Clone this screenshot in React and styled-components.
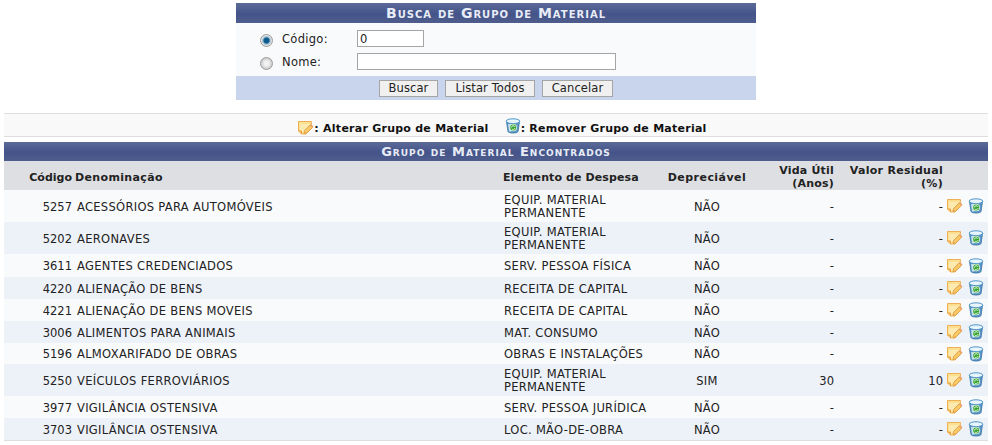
import React from 'react';
import styled, { createGlobalStyle } from 'styled-components';

const GlobalStyle = createGlobalStyle`
  html, body {
    margin: 0;
    padding: 0;
    background: #fff;
    font-family: "DejaVu Sans", Verdana, sans-serif;
    font-size: 11.5px;
    letter-spacing: 0.3px;
    color: #222;
  }
`;

const Page = styled.div`
  width: 992px;
  height: 445px;
  overflow: hidden;
  padding: 3px 4px 0;
  box-sizing: border-box;
`;

const Caption = styled.div`
  height: ${({ $h }) => $h}px;
  line-height: ${({ $h }) => $h + 1}px;
  background: linear-gradient(#5b6a97 0%, #44548a 55%, #4f5d8c 100%);
  color: #e8ecf6;
  font-weight: bold;
  font-variant: small-caps;
  font-size: ${({ $size }) => $size}px;
  letter-spacing: ${({ $ls }) => $ls}px;
  text-align: center;
`;

const SearchBox = styled.form`
  width: 520px;
  margin: 0 auto;
  background: #f9fafc;
`;

const SearchBody = styled.div`
  display: grid;
  grid-template-columns: 22px 75px 1fr;
  grid-auto-rows: 23px;
  align-items: center;
  padding: 4px 0 0 24px;
  height: 49px;
`;

const Radio = styled.span`
  width: 11px;
  height: 11px;
  border-radius: 50%;
  border: 1px solid #9a9a9a;
  margin-top: 3px;
  background: ${({ $on }) =>
    $on
      ? 'radial-gradient(circle, #0d5a8c 0 2.5px, #8ab4cf 3.5px, #e4e4e4 5px)'
      : 'radial-gradient(circle, #f2f2f2 0 2px, #d2d2d2 5px)'};
`;

const Label = styled.label`
  color: #222;
`;

const Input = styled.input`
  box-sizing: border-box;
  display: block;
  width: ${({ $w }) => $w}px;
  height: 17px;
  padding: 0 2px;
  border: 1px solid #a5a5a5;
  background: #fff;
  font: 11.5px "DejaVu Sans", Verdana, sans-serif;
  color: #222;
`;

const SearchFooter = styled.div`
  height: 24px;
  background: #c8d5ec;
  display: flex;
  justify-content: center;
  align-items: center;
  gap: 7px;
`;

const Button = styled.button`
  height: 17px;
  width: ${({ $w }) => $w}px;
  padding: 0;
  border: 1px solid #a5a5a5;
  background: #f0f0f0;
  font: 11.5px "DejaVu Sans", Verdana, sans-serif;
  letter-spacing: 0.1px;
  color: #222;
`;

const Legend = styled.div`
  margin-top: 13px;
  height: 22px;
  border-top: 1px solid #ddd;
  border-bottom: 1px solid #ddd;
  background: #f9f9f9;
  display: flex;
  justify-content: center;
  align-items: center;
  gap: 16px;
  font-size: 11px;
  font-weight: bold;
  letter-spacing: 0.25px;
  color: #111;
  padding-left: 12px;
`;

const LegendItem = styled.span`
  display: inline-flex;
  align-items: center;
  line-height: 13px;
  padding-top: 6px;
  svg {
    margin-top: ${({ $iconTop }) => $iconTop}px;
  }
`;

const Results = styled.div`
  margin-top: 5px;
  border-bottom: 1px solid #ddd;
`;

const Table = styled.table`
  width: 984px;
  table-layout: fixed;
  border-collapse: collapse;
`;

const HeadRow = styled.tr`
  height: 29px;
  background: #dedfe3;
`;

const Th = styled.th`
  padding: 3px ${({ $pr }) => $pr ?? 2}px 0 ${({ $pl }) => $pl ?? 2}px;
  font-weight: bold;
  font-size: 11px;
  line-height: 13px;
  letter-spacing: ${({ $ls }) => $ls ?? 0.2}px;
  color: #222;
  text-align: ${({ $align }) => $align || 'left'};
`;

const Row = styled.tr`
  height: ${({ $h }) => $h}px;
  background: ${({ $odd }) => ($odd ? '#edf1f8' : '#f9fafc')};
`;

const Td = styled.td`
  padding: 2px ${({ $pr }) => $pr ?? 2}px 0 ${({ $pl }) => $pl ?? 2}px;
  line-height: 13px;
  letter-spacing: ${({ $ls }) => $ls ?? 0.3}px;
  color: #222;
  text-align: ${({ $align }) => $align || 'left'};
`;

const IconCell = styled.td`
  padding: 0;
  line-height: 0;
  text-align: center;
`;

const PencilIcon = () => (
  <svg width="17" height="16" viewBox="0 0 17 16">
    <path d="M1.5 1.5H14.5L14 8L9 14H4.5L1.5 11Z" fill="#fde08f" stroke="#eeb054" strokeWidth="1" />
    <path d="M3 4H13V8L9 12.5H5L3 10.5Z" fill="#fdeab0" />
    <path d="M1.5 11L4.5 11V14" fill="#f5c877" stroke="#e59c3c" strokeWidth="1" />
    <path d="M7.5 10.5L13 5L15.5 7.5L10 13L7 13.5Z" fill="#f8c766" stroke="#dc9740" strokeWidth="0.8" />
    <path d="M13 5L15.5 7.5L16.5 6.5L14 4Z" fill="#e9a276" />
  </svg>
);

const BinIcon = () => (
  <svg width="16" height="16" viewBox="0 0 16 16">
    <path d="M1.5 3.5L3 13.5C3.5 15.5 12.5 15.5 13 13.5L14.5 3.5Z" fill="#5c98c8" stroke="#33709f" strokeWidth="0.8" />
    <ellipse cx="8" cy="3.2" rx="6.8" ry="2.4" fill="#e9f5fc" stroke="#4b93c9" strokeWidth="1" />
    <path d="M3 6L4 13.5H6.5L6 6Z" fill="#bcdcf1" />
    <circle cx="8.2" cy="9.5" r="3.8" fill="#dff0e0" />
    <circle cx="8.2" cy="9.5" r="3" fill="#35a332" />
    <path d="M6.4 9.5A1.9 1.9 0 0 1 10 8.8M10 10.2A1.9 1.9 0 0 1 6.8 10.9" fill="none" stroke="#e6f7dd" strokeWidth="1" />
  </svg>
);

const rows = [
  ['5257', 'ACESSÓRIOS PARA AUTOMÓVEIS', 'EQUIP. MATERIAL PERMANENTE', 'NÃO', '-', '-', 32],
  ['5202', 'AERONAVES', 'EQUIP. MATERIAL PERMANENTE', 'NÃO', '-', '-', 32],
  ['3611', 'AGENTES CREDENCIADOS', 'SERV. PESSOA FÍSICA', 'NÃO', '-', '-', 23],
  ['4220', 'ALIENAÇÃO DE BENS', 'RECEITA DE CAPITAL', 'NÃO', '-', '-', 22],
  ['4221', 'ALIENAÇÃO DE BENS MOVEIS', 'RECEITA DE CAPITAL', 'NÃO', '-', '-', 22],
  ['3006', 'ALIMENTOS PARA ANIMAIS', 'MAT. CONSUMO', 'NÃO', '-', '-', 22],
  ['5196', 'ALMOXARIFADO DE OBRAS', 'OBRAS E INSTALAÇÕES', 'NÃO', '-', '-', 21],
  ['5250', 'VEÍCULOS FERROVIÁRIOS', 'EQUIP. MATERIAL PERMANENTE', 'SIM', '30', '10', 32],
  ['3977', 'VIGILÂNCIA OSTENSIVA', 'SERV. PESSOA JURÍDICA', 'NÃO', '-', '-', 22],
  ['3703', 'VIGILÂNCIA OSTENSIVA', 'LOC. MÃO-DE-OBRA', 'NÃO', '-', '-', 22],
];

const App = () => (
  <Page>
    <GlobalStyle />
    <SearchBox onSubmit={(e) => e.preventDefault()}>
      <Caption $h={20} $size={14} $ls={1}>Busca de Grupo de Material</Caption>
      <SearchBody>
        <Radio $on />
        <Label>Código:</Label>
        <Input $w={67} defaultValue="0" />
        <Radio />
        <Label>Nome:</Label>
        <Input $w={259} />
      </SearchBody>
      <SearchFooter>
        <Button $w={59}>Buscar</Button>
        <Button $w={90}>Listar Todos</Button>
        <Button $w={71}>Cancelar</Button>
      </SearchFooter>
    </SearchBox>

    <Legend>
      <LegendItem $iconTop={-1}><PencilIcon />: Alterar Grupo de Material</LegendItem>
      <LegendItem $iconTop={-5}><BinIcon />: Remover Grupo de Material</LegendItem>
    </Legend>

    <Results>
      <Caption $h={19} $size={13} $ls={1}>Grupo de Material Encontrados</Caption>
      <Table>
        <colgroup>
          <col style={{ width: 69 }} />
          <col style={{ width: 428 }} />
          <col style={{ width: 164 }} />
          <col style={{ width: 84 }} />
          <col style={{ width: 88 }} />
          <col style={{ width: 107 }} />
          <col style={{ width: 20 }} />
          <col style={{ width: 24 }} />
        </colgroup>
        <thead>
          <HeadRow>
            <Th $align="right" $ls={0} $pr={1}>Código</Th>
            <Th $ls={0.35}>Denominação</Th>
            <Th $ls={0.1}>Elemento de Despesa</Th>
            <Th $align="center" $ls={0.45}>Depreciável</Th>
            <Th $align="right" $pr={3}>Vida Útil<br />(Anos)</Th>
            <Th $align="right" $pr={1} $ls={0.3}>Valor Residual<br />(%)</Th>
            <Th />
            <Th />
          </HeadRow>
        </thead>
        <tbody>
          {rows.map(([code, name, element, dep, life, residual, h], i) => (
            <Row key={code} $h={h} $odd={i % 2 === 1}>
              <Td $align="right" $ls={0} $pr={1}>{code}</Td>
              <Td $pl={4}>{name}</Td>
              <Td $pl={3}>{element}</Td>
              <Td $align="center">{dep}</Td>
              <Td $align="right" $pr={3} $ls={0}>{life}</Td>
              <Td $align="right" $pr={1} $ls={0}>{residual}</Td>
              <IconCell><PencilIcon /></IconCell>
              <IconCell><BinIcon /></IconCell>
            </Row>
          ))}
        </tbody>
      </Table>
    </Results>
  </Page>
);

export default App;
